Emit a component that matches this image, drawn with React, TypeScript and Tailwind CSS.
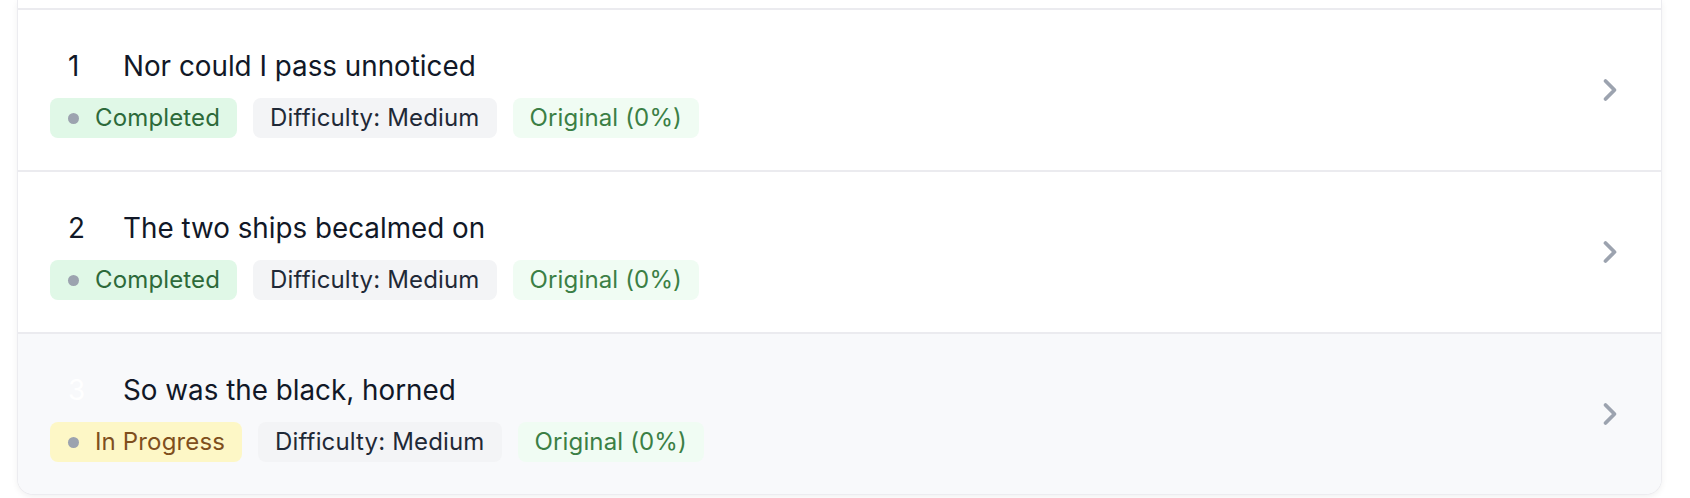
import { ChevronRight } from "lucide-react";

type Status = "Completed" | "In Progress";

const items: { n: number; title: string; status: Status; active?: boolean }[] = [
  { n: 1, title: "Nor could I pass unnoticed", status: "Completed" },
  { n: 2, title: "The two ships becalmed on", status: "Completed" },
  { n: 3, title: "So was the black, horned", status: "In Progress", active: true },
];

const statusStyle: Record<Status, string> = {
  Completed: "bg-[#e0f8e7] text-[#2d6a3a]",
  "In Progress": "bg-[#fdf7c6] text-[#7f4f1d]",
};

function Badge({ className, children }: { className: string; children: React.ReactNode }) {
  return (
    <span className={`flex h-10 items-center rounded-lg px-[17px] text-[24px] leading-10 tracking-[0.15px] ${className}`}>
      {children}
    </span>
  );
}

export default function App() {
  return (
    <div className="min-h-[498px] bg-white font-['Inter',sans-serif]">
      <div className="ml-[17px] w-[1645px] overflow-hidden rounded-b-2xl border-x border-b border-[#ececf0] bg-white shadow-[0_2px_6px_rgba(0,0,0,0.06)]">
        <div className="h-[10px] border-b-2 border-[#ebebef]" />
        <ul>
          {items.map((item, i) => (
            <li
              key={item.n}
              className={`flex items-center pr-[33px] ${i < items.length - 1 ? "border-b-2 border-[#ebebef]" : ""} ${item.active ? "bg-[#f8f9fb]" : "bg-white"}`}
            >
              <div className="flex-1 pl-8 pt-[38px] pb-8">
                <div className="flex h-9 items-center pl-[18px] text-[27.8px] leading-9">
                  <span className={`w-[55px] ${item.active ? "text-white" : "text-[#111827]"}`}>{item.n}</span>
                  <span className="text-[#111827]">{item.title}</span>
                </div>
                <div className="mt-[14px] flex gap-4">
                  <Badge className={statusStyle[item.status]}>
                    <span className="mr-4 ml-px h-[11px] w-[11px] rounded-full bg-[#9ca3af]" />
                    {item.status}
                  </Badge>
                  <Badge className="bg-[#f3f4f6] text-[#1f2937]">Difficulty: Medium</Badge>
                  <Badge className="bg-[#f0fcf3] text-[#3b7f45]">Original (0%)</Badge>
                </div>
              </div>
              <ChevronRight size={36} strokeWidth={2.5} className="text-[#9ca3af]" />
            </li>
          ))}
        </ul>
      </div>
    </div>
  );
}
